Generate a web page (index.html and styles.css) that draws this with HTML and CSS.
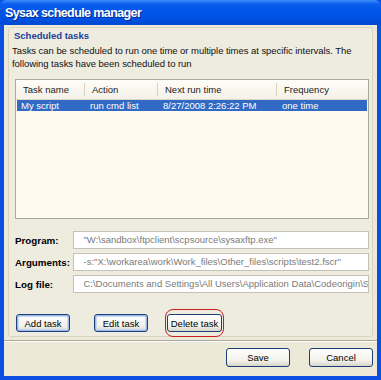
FILE: index.html
```html
<!DOCTYPE html>
<html lang="en">
<head>
    <meta charset="UTF-8">
    <title>Sysax schedule manager</title>
    <link rel="stylesheet" href="styles.css">
</head>
<body>
    <div class="window">
        <div class="titlebar">
            <span class="title">Sysax schedule manager</span>
        </div>
        <div class="client">
            <div class="group">
                <div class="group-title">Scheduled tasks</div>
                <p class="intro">Tasks can be scheduled to run one time or multiple times at specific intervals. The<br>following tasks have been scheduled to run</p>

                <div class="listview">
                    <div class="lv-head">
                        <span>Task name</span>
                        <span>Action</span>
                        <span>Next run time</span>
                        <span>Frequency</span>
                    </div>
                    <div class="lv-row selected">
                        <span>My script</span>
                        <span>run cmd list</span>
                        <span>8/27/2008 2:26:22 PM</span>
                        <span>one time</span>
                    </div>
                </div>

                <div class="fields">
                    <div class="field">
                        <label>Program:</label>
                        <div class="input">"W:\sandbox\ftpclient\scpsource\sysaxftp.exe"</div>
                    </div>
                    <div class="field">
                        <label>Arguments:</label>
                        <div class="input">-s:"X:\workarea\work\Work_files\Other_files\scripts\test2.fscr"</div>
                    </div>
                    <div class="field">
                        <label>Log file:</label>
                        <div class="input">C:\Documents and Settings\All Users\Application Data\Codeorigin\Sy</div>
                    </div>
                </div>

                <div class="task-buttons">
                    <button class="btn focused">Add task</button>
                    <button class="btn focused">Edit task</button>
                    <span class="circled"><button class="btn">Delete task</button></span>
                </div>
            </div>

            <div class="separator"></div>

            <div class="dialog-buttons">
                <button class="btn wide">Save</button>
                <button class="btn wide">Cancel</button>
            </div>
        </div>
    </div>
</body>
</html>
```

FILE: styles.css
```css
body {
    margin: 0;
    font-family: "Liberation Sans", Arial, sans-serif;
    font-size: 9.5px;
    color: #000;
    background: #fff;
}
.window {
    width: 381px;
    height: 380px;
    box-sizing: border-box;
    padding: 0 4px 4px 4px;
    background: #0a4fe0;
    display: flex;
    flex-direction: column;
}
.titlebar {
    height: 25px;
    margin: 0 -4px;
    padding-left: 5px;
    display: flex;
    align-items: center;
    background: linear-gradient(#3d8ff7 0, #0a5eee 4px, #0055e8 12px, #0050e0 20px, #0046d0 25px);
    border-radius: 6px 6px 0 0;
}
.title {
    color: #fff;
    font-weight: bold;
    font-size: 12.5px;
    letter-spacing: -0.6px;
    text-shadow: 1px 1px 0 #0b2a8c;
}
.client {
    flex: 1;
    background: #ece9d8;
    display: flex;
    flex-direction: column;
}
.group {
    margin: 2px 4px 0 4px;
    height: 310px;
    box-sizing: border-box;
    padding: 2px 3px 0 4px;
    border: 1px solid #d8d4c4;
    border-radius: 3px;
    background: #eeebdf;
}
.group-title {
    font-weight: bold;
    color: #21409a;
    line-height: 12px;
    padding-left: 1px;
}
.intro {
    margin: 3px 0 0 -1px;
    line-height: 12.5px;
    color: #111;
    letter-spacing: -0.05px;
}
.listview {
    margin: 9px 0 0 2px;
    height: 140px;
    box-sizing: border-box;
    border: 1px solid #a9a9a0;
    background: #fffaf0;
}
.lv-head,
.lv-row {
    display: grid;
    grid-template-columns: 69px 73px 119px 90px;
}
.lv-head {
    height: 19px;
    align-items: center;
    background: linear-gradient(#fffdf7, #f3f1e8);
    border-bottom: 1px solid #dcd8c8;
    color: #222;
}
.lv-head span {
    padding-left: 7px;
    border-right: 1px solid #d6d2c2;
    line-height: 13px;
}
.lv-head span:last-child {
    border-right: none;
}
.lv-row {
    height: 11px;
    line-height: 11px;
    margin: 0 1px 0 1px;
}
.lv-row span {
    padding-left: 4px;
    white-space: nowrap;
}
.lv-row.selected {
    background: #316ac5;
    color: #fff;
}
.fields {
    margin-top: 12px;
    display: flex;
    flex-direction: column;
    gap: 4px;
}
.field {
    display: flex;
    align-items: center;
}
.field label {
    width: 59px;
    padding-left: 2px;
    font-weight: bold;
    font-size: 9.8px;
}
.input {
    width: 298px;
    height: 18px;
    box-sizing: border-box;
    border: 1px solid #c4c2b8;
    background: #fff;
    color: #7a7a7a;
    padding: 0 0 0 9px;
    line-height: 16px;
    white-space: nowrap;
    overflow: hidden;
}
.task-buttons {
    margin-top: 16px;
    display: flex;
    align-items: center;
    padding-left: 3px;
}
.btn {
    font-family: "Liberation Sans", Arial, sans-serif;
    font-size: 9.5px;
    width: 54px;
    height: 18px;
    padding: 0;
    border: 1px solid #1c3f78;
    border-radius: 3px;
    background: linear-gradient(#fefefd, #f2f1ea 70%, #d8d5c8);
    color: #000;
}
.btn.focused {
    box-shadow: inset 0 0 0 1px #9cb9e8, inset 0 0 0 2px #c6d8f4;
}
.task-buttons .btn + .btn {
    margin-left: 24px;
}
.circled {
    margin-left: 17px;
    padding: 4px 1px 4px 1px;
    border: 1px solid #c81e1e;
    border-radius: 8px;
    display: flex;
}
.circled .btn {
    width: 55px;
}
.separator {
    margin: 3px 0 0 0;
    height: 1px;
    background: #aca899;
    border-bottom: 1px solid #fff;
}
.dialog-buttons {
    margin-top: 6px;
    display: flex;
    justify-content: flex-end;
    gap: 19px;
    padding-right: 4px;
}
.btn.wide {
    width: 64px;
    height: 19px;
}
```
